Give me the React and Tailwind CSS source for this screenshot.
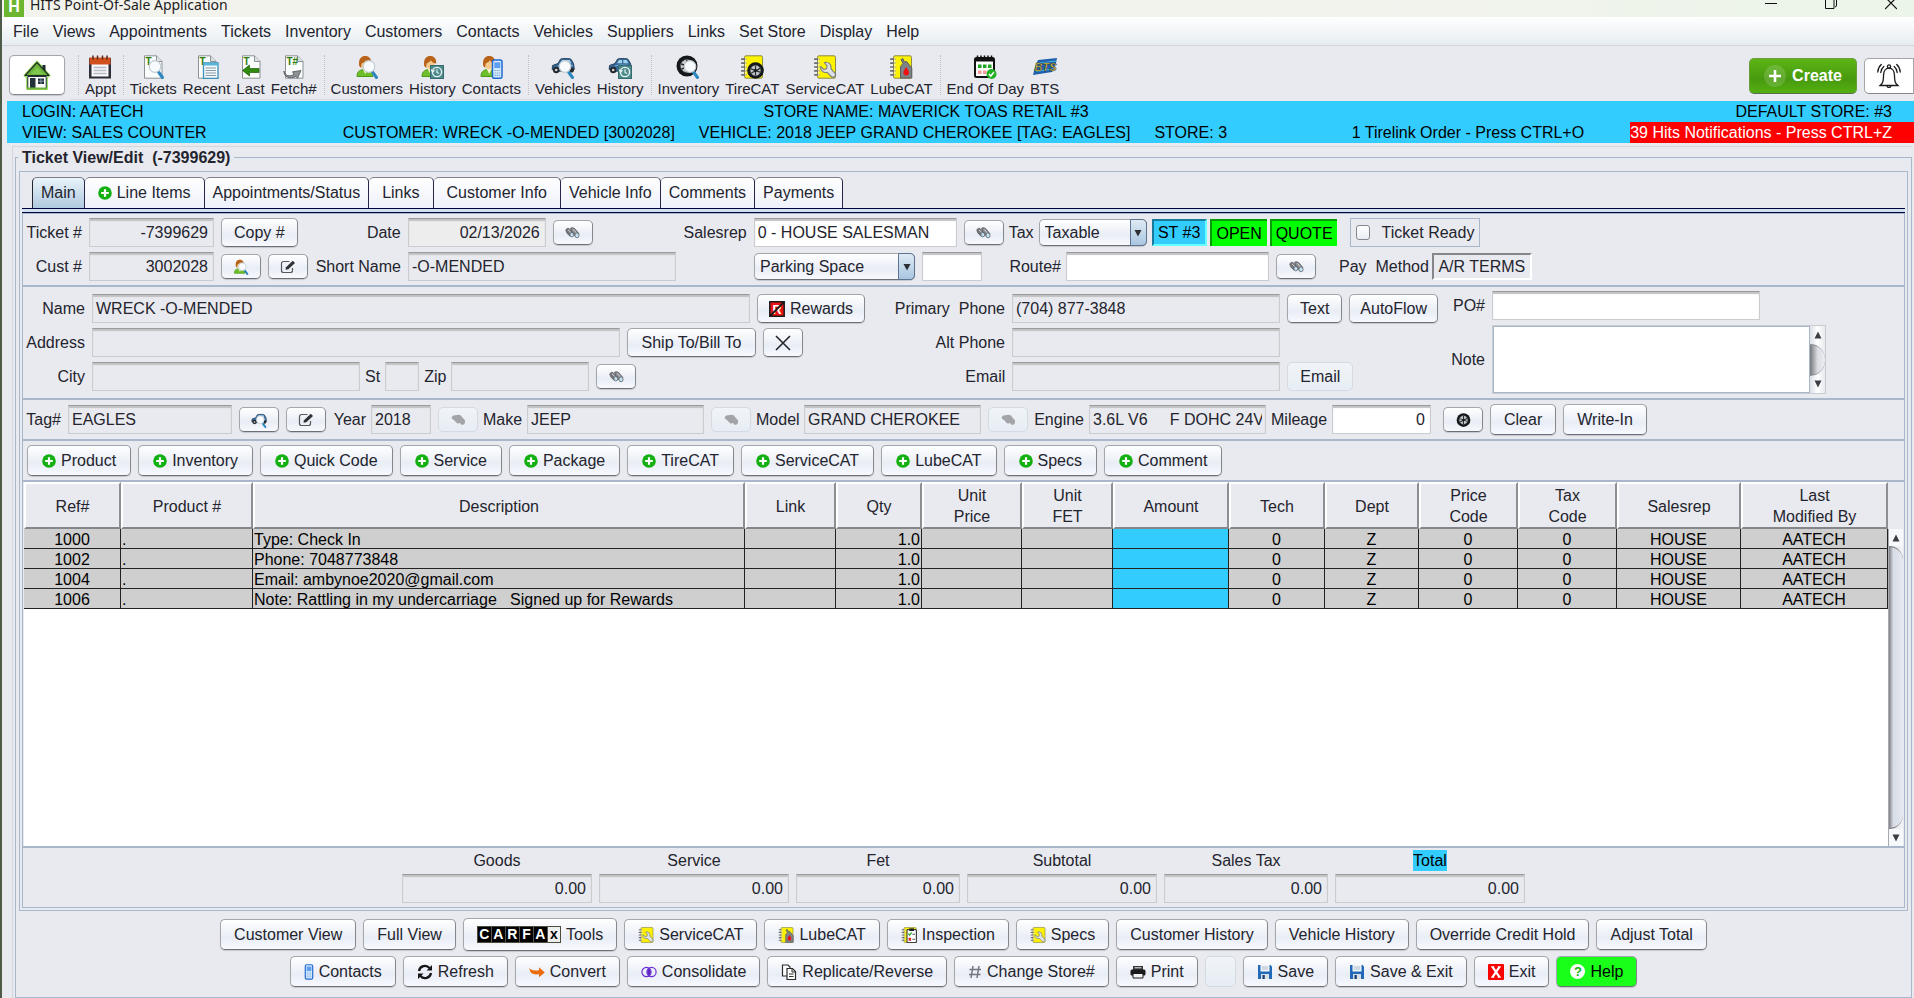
import React, { useState } from "react";
import clsx from "clsx";

/* ------------------ Data ------------------ */
const menus = [
  "File", "Views", "Appointments", "Tickets", "Inventory", "Customers", "Contacts",
  "Vehicles", "Suppliers", "Links", "Set Store", "Display", "Help",
];

const columns = [
  { label: "Ref#", width: "w-[97px]" },
  { label: "Product #", width: "w-[132px]" },
  { label: "Description", width: "" },
  { label: "Link", width: "w-[91px]" },
  { label: "Qty", width: "w-[86px]" },
  { label: "Unit\nPrice", width: "w-[100px]" },
  { label: "Unit\nFET", width: "w-[91px]" },
  { label: "Amount", width: "w-[116px]" },
  { label: "Tech", width: "w-[96px]" },
  { label: "Dept", width: "w-[94px]" },
  { label: "Price\nCode", width: "w-[99px]" },
  { label: "Tax\nCode", width: "w-[99px]" },
  { label: "Salesrep", width: "w-[124px]" },
  { label: "Last\nModified By", width: "w-[147px]" },
];

const lines = [
  { ref: "1000", text: "Type: Check In" },
  { ref: "1002", text: "Phone: 7048773848" },
  { ref: "1004", text: "Email: ambynoe2020@gmail.com" },
  { ref: "1006", text: "Note: Rattling in my undercarriage   Signed up for Rewards" },
];

const addButtons = [
  "Product", "Inventory", "Quick Code", "Service", "Package",
  "TireCAT", "ServiceCAT", "LubeCAT", "Specs", "Comment",
];

const totals = [
  { label: "Goods", width: "w-[190px]" },
  { label: "Service", width: "w-[190px]" },
  { label: "Fet", width: "w-[164px]" },
  { label: "Subtotal", width: "w-[190px]" },
  { label: "Sales Tax", width: "w-[164px]" },
  { label: "Total", width: "w-[190px]", highlight: true },
];

/* ------------------ Icon parts (24x24) ------------------ */
const Svg = ({ size = "w-6 h-6", box = "0 0 24 24", children }) => (
  <svg className={clsx(size, "shrink-0")} viewBox={box} fill="none" aria-hidden="true">
    {children}
  </svg>
);

const Magnifier = () => (
  <g>
    <path d="M17.5 17 L21.5 22.5" stroke="#2b87bd" strokeWidth="3" strokeLinecap="round" />
    <circle cx="14" cy="11.5" r="5.8" fill="#f7fbfd" stroke="#c3cdd3" strokeWidth="1.2" />
  </g>
);

const Clock = () => (
  <g>
    <rect x="10" y="10" width="14" height="14" fill="#4f8a8b" />
    <rect x="10.5" y="10.5" width="13" height="13" stroke="#356b70" />
    <circle cx="17" cy="17" r="4.6" stroke="#e6f3f3" strokeWidth="1.4" />
    <path d="M17 14.3V17.4L19 18.6M11.2 14.5L12.6 17L14.6 15.2" stroke="#e6f3f3" strokeWidth="1.2" />
  </g>
);

const Phone = () => (
  <g>
    <rect x="13.5" y="5" width="9.5" height="18.3" rx="1.8" fill="#d7ebff" stroke="#1f69cf" strokeWidth="1.5" />
    <rect x="15.3" y="7.3" width="6" height="5.8" fill="#5e9ef0" />
    <path d="M15.5 15.5h5.6M15.5 18h5.6M15.5 20.4h5.6" stroke="#7ea9d8" strokeWidth="1.2" strokeDasharray="1.4 .7" />
  </g>
);

const Person = () => (
  <g>
    <path d="M2 21.5C2 16 5.5 14.5 10 14.5S17.5 16 18 21.5Z" fill="#6fbf2a" stroke="#4c9a17" />
    <path d="M7.5 13.5L10.3 19L13 13.5Z" fill="#fff1d2" />
    <ellipse cx="10" cy="8.5" rx="4.3" ry="5.8" fill="#f5c98a" />
    <path d="M4.2 11C3.2 3.5 6.5 1 10.2 1s6.5 2.5 6 7.5C13.5 8.5 12 7 11 5.2 9.5 7.5 7 8 6.5 8.8L6.2 13Z" fill="#b9621a" />
  </g>
);

const Car = () => (
  <g>
    <path d="M1.5 10.5L7 8.5L9.5 4.2C10 3.3 19 3.3 20 4.3L22.5 8.5L23.3 14.5L6 16.5L1.2 14.5Z" fill="#35699b" stroke="#233e5a" />
    <path d="M9 8.2L11 5H14V8.2ZM15.3 8.2V5H18.8L20.3 8.2Z" fill="#9fd0ea" />
    <path d="M7 11C11 9.6 17 10 22 10.5" stroke="#74b3dd" />
    <circle cx="5.2" cy="15" r="3.2" fill="#24282c" />
    <circle cx="5.2" cy="15" r="1.3" fill="#cfd5da" />
    <circle cx="20.3" cy="15" r="2.6" fill="#24282c" />
  </g>
);

const Doc = ({ letter = "T" }) => (
  <g>
    <path d="M3.5 .8H15.5L21 6.5V23.2H3.5Z" fill="#fbfcfc" stroke="#8a9296" />
    <path d="M15.5 .8V6.5H21" fill="#dde3e5" stroke="#8a9296" />
    <text x="4.5" y="10" fontSize="10" fontWeight="700" fontFamily="Liberation Sans" fill="#2f7d0a">
      {letter}
    </text>
  </g>
);

const Notebook = () => (
  <g>
    <rect x="4.5" y=".8" width="18" height="22.4" rx="1.5" fill="#fdf200" stroke="#8c8a4a" />
    <path
      d="M1.8 4.2h4M1.8 8.1h4M1.8 12h4M1.8 15.9h4M1.8 19.8h4"
      stroke="#6d6d6d"
      strokeWidth="1.7"
      strokeLinecap="round"
    />
    <path d="M5.8 3v18" stroke="#fffbb0" strokeWidth="1" />
  </g>
);

const Tire = ({ cx = 12, cy = 12, r = 9 }) => (
  <g>
    <circle cx={cx} cy={cy} r={r} fill="#15181a" />
    <circle cx={cx} cy={cy} r={r * 0.62} fill="#c8ccd0" stroke="#5c6064" strokeWidth=".6" />
    <path
      d={`M${cx} ${cy - r * 0.58}V${cy + r * 0.58}M${cx - r * 0.55} ${cy - r * 0.2}L${cx + r * 0.55} ${cy + r * 0.2}M${cx + r * 0.55} ${cy - r * 0.25}L${cx - r * 0.5} ${cy + r * 0.3}`}
      stroke="#2a2d30"
      strokeWidth={r * 0.15}
    />
    <circle cx={cx} cy={cy} r={r * 0.18} fill="#15181a" />
  </g>
);

const Wrench = () => (
  <path
    d="M12.5 6.5a5 5 0 0 1 6.3 6.2l4 4.3a2.4 2.4 0 0 1-3.5 3.5l-4.2-4.2a5 5 0 0 1-6.3-5.8l3 3 2.7-.7.7-2.7Z"
    fill="#dfe2e4"
    stroke="#7b7e80"
    strokeWidth="1.1"
    transform="translate(-1 1)"
  />
);

const OilCan = () => (
  <g>
    <path d="M12 4.5l2-.8 1.2 3h2.6L22.8 13V23H11.5V11.5L14 8.5Z" fill="#7f8386" stroke="#5b5e60" />
    <path d="M17.2 12c1.7 2.6 2.8 4 2.8 5.6a2.8 2.8 0 0 1-5.6 0c0-1.6 1.1-3 2.8-5.6Z" fill="#ee1111" />
  </g>
);

/* ------------------ Icons ------------------ */
const HouseIcon = () => (
  <Svg size="w-7 h-[30px]" box="0 0 28 30">
    <path
      d="M1.5 15.5L14 1.5L26.5 15.5L24 17.5V29H4V17.5Z"
      fill="#ffffff"
      stroke="#9fdc6b"
      strokeWidth="2"
      strokeLinejoin="round"
    />
    <path d="M19.5 5h3v6h-3z" fill="#1d2b33" />
    <path d="M14 2.5L26 15.5H2Z" fill="#6cb33a" stroke="#1f2f24" strokeWidth="1.2" strokeLinejoin="round" />
    <path d="M14 7L20.5 14H7.5Z" fill="#7fc94a" />
    <path d="M4.8 16.5H23.2V28.5H4.8Z" fill="#fff" stroke="#22303a" strokeWidth="1" />
    <path d="M7 18h5.5v10H7z" fill="#22303a" />
    <path d="M15 18.5h6V24h-6z" fill="#22303a" />
    <path d="M18 18.5V24M15 21.2h6" stroke="#9db4c0" strokeWidth=".8" />
    <path d="M4 28.5h20" stroke="#6cb33a" strokeWidth="2" />
  </Svg>
);

const ApptIcon = () => (
  <Svg>
    <path d="M1 3h22v20.5H1z" fill="#2f2c3a" />
    <path d="M3.5 7h17v14.5h-17z" fill="#f7f9fb" />
    <path d="M1.5 2.5h21v7h-21z" fill="#d2501c" />
    <path d="M5 .5v4M9.5 .5v4M14.5 .5v4M19 .5v4" stroke="#5a2817" strokeWidth="1.5" />
    <path d="M5.5 12.5h13M5.5 15.5h13M5.5 18.5h13" stroke="#b7bcc4" strokeWidth="1.3" />
  </Svg>
);

const EndOfDayIcon = () => (
  <Svg>
    <rect x="2" y="3" width="19" height="19" rx="1.5" fill="#fff" stroke="#111" strokeWidth="2" />
    <path d="M2 3.5h19v3H2z" fill="#111" />
    <path d="M4.5 .5v5M8 .5v5M11.5 .5v5M15 .5v5M18.5 .5v5" stroke="#111" strokeWidth="1.5" />
    <path d="M5 9.5h3.5v3.5H5zM10 9.5h3.5v3.5H10zM15 9.5h3.5v3.5H15z" fill="#1fa51f" />
    <path d="M5 15.5h3.5V19H5zM10 15.5h3.5V19H10z" fill="#f59a9a" />
    <circle cx="18.5" cy="19" r="5" fill="#22b122" />
    <path d="M16 19l1.8 2 3.2-4" stroke="#fff" strokeWidth="1.5" />
  </Svg>
);

const BtsIcon = () => (
  <Svg size="w-[26px] h-6" box="0 0 26 24">
    <path d="M6 5L25 3L24 8L20 17L1 20L3 12Z" fill="#1e5fae" />
    <path d="M4 16.5L21 14M5 8.5L24 6" stroke="#4ac0d8" strokeWidth="1" />
    <text
      x="2.5"
      y="16"
      fontSize="11"
      fontWeight="700"
      fontStyle="italic"
      fontFamily="Liberation Sans"
      fill="#e6c230"
      stroke="#16314f"
      strokeWidth=".5"
    >
      BTS
    </text>
  </Svg>
);

const RecentIcon = () => (
  <Svg>
    <Doc />
    <path d="M8.5 8h14.5v15.3H8.5z" fill="#f3fafd" stroke="#3c8fb5" strokeWidth="1.3" />
    <path d="M8.5 8h14.5v2.5H8.5z" fill="#58b4d8" />
    <path d="M10.5 13h10.5M10.5 15.5h10.5M10.5 18h10.5M10.5 20.5h10.5" stroke="#8799a3" />
  </Svg>
);

const LastIcon = () => (
  <Svg>
    <Doc />
    <path d="M3.5 15.5L10.5 10V13.5H20V17.5H10.5V21Z" fill="#2f8a10" stroke="#1c5c06" strokeWidth=".7" />
  </Svg>
);

const FetchIcon = () => (
  <Svg>
    <Doc letter="T#" />
    <path d="M2 16C3 20.5 7 22 12 19.5L10.5 16.8L19 15.5L15.5 23.3L14 21.5C8 24.5 1.5 22 2 16Z" fill="#8c9194" stroke="#54585b" strokeWidth=".8" />
  </Svg>
);

const Bino = ({ disabled }) => (
  <Svg size="w-[15px] h-3" box="0 0 15 12">
    {disabled ? (
      <path
        d="M.8 4.5C.5 2.5 2 1 4 1.2L6.5 1C8.5 .5 10 1.5 11 3L13.8 6C14.6 8.5 13.6 10.5 12 10.8S9.5 10 9 8.8C8 9.8 6.2 9.8 5 8.2L3.5 6.5Z"
        fill="#a3a4a8"
      />
    ) : (
      <g strokeWidth=".7" stroke="#4d5054">
        <path d="M5.5 1.2C7 .5 9 .7 10.3 2.2L13.8 6.5L10.3 9.3L6.5 4.5Z" fill="#85888c" />
        <path d="M.9 3.8C.7 2 2.2 1 3.8 1.4L8 5.8L5.2 9.2L2.2 6.5Z" fill="#75787c" />
        <path d="M3 2.8L6.3 6M8 2.2L11.5 6" stroke="#d5d8db" strokeWidth="1" />
        <ellipse cx="6.8" cy="7.7" rx="1.9" ry="2.2" fill="#c4e0f3" />
        <ellipse cx="12" cy="8.3" rx="2.1" ry="2.5" fill="#c4e0f3" />
      </g>
    )}
  </Svg>
);

const EditIcon = () => (
  <Svg size="w-4 h-[14px]" box="0 0 16 14">
    <path d="M9.5 1.5H3.5a2 2 0 0 0-2 2v7a2 2 0 0 0 2 2h7a2 2 0 0 0 2-2V8" stroke="#55585c" strokeWidth="1.2" />
    <path d="M5.5 9.8L6 7.2L12.7 .8L15 3L8.3 9.3Z" fill="#2e3135" />
  </Svg>
);

const PlusIcon = () => (
  <Svg size="w-[14px] h-[14px]" box="0 0 14 14">
    <circle cx="7" cy="7" r="6.8" fill="#14b012" />
    <path d="M7 3.2v7.6M3.2 7h7.6" stroke="#fff" strokeWidth="2.2" />
  </Svg>
);

const BellIcon = () => (
  <Svg size="w-6 h-[26px]" box="0 0 24 26">
    <g stroke="#1c1c1c" strokeWidth="1.3" strokeLinecap="round">
      <path d="M5 20.5C6.5 18.5 6.5 17 6.5 12.5C6.5 8 8.8 5.2 12 5.2S17.5 8 17.5 12.5C17.5 17 17.5 18.5 19 20.5L21 22.5H3Z" />
      <path d="M10 23a2.1 2.1 0 0 0 4 0" />
      <circle cx="12" cy="3.5" r="1.6" />
      <path d="M6.8 3.5C5 5 4 7 3.8 9.5M4.3 1.5C2 3.5 1 6 .8 9M17.2 3.5C19 5 20 7 20.2 9.5M19.7 1.5C22 3.5 23 6 23.2 9" />
    </g>
  </Svg>
);

const SmallServiceCat = () => (
  <Svg size="w-4 h-4">
    <Notebook />
    <Wrench />
  </Svg>
);

const SmallLubeCat = () => (
  <Svg size="w-4 h-4">
    <Notebook />
    <OilCan />
  </Svg>
);

const InspectionIcon = () => (
  <Svg size="w-4 h-4">
    <Notebook />
    <path d="M9 4h14v19.5H9z" fill="#fff" stroke="#222" strokeWidth="1.5" />
    <path d="M12.5 2h7v4h-7z" fill="#222" />
    <path d="M11 10l2 2 3-4" stroke="#1fa51f" strokeWidth="1.8" />
    <path d="M11.5 16.5l3.5 4M15 16.5l-3.5 4" stroke="#e02020" strokeWidth="1.8" />
    <path d="M17 11h4M17 18.5h4" stroke="#555" strokeWidth="1.6" />
  </Svg>
);

const RewardsIcon = () => (
  <Svg size="w-4 h-4" box="0 0 16 16">
    <path d="M.8 .8h14.4v14.4H.8z" fill="#e81414" stroke="#1a1a1a" strokeWidth="1.5" />
    <text x="3.5" y="12.8" fontSize="12.5" fontWeight="700" fontFamily="Liberation Sans" fill="#fff">
      R
    </text>
    <path d="M1 15L15 1" stroke="#1a1a1a" strokeWidth="1.8" />
  </Svg>
);

const PhoneIcon = () => (
  <Svg size="w-[10px] h-4" box="12.5 4 11.5 20.5">
    <Phone />
  </Svg>
);

const RefreshIcon = () => (
  <Svg size="w-4 h-4" box="0 0 16 16">
    <path d="M2 7A6 6 0 0 1 12.5 4M14 9A6 6 0 0 1 3.5 12" stroke="#161616" strokeWidth="2.3" />
    <path d="M15 1v5.5H9.5ZM1 15V9.5h5.5Z" fill="#161616" />
  </Svg>
);

const ConvertIcon = () => (
  <Svg size="w-4 h-4" box="0 0 16 16">
    <path d="M.5 3.5C1.5 6.300 4 6.800 10 6.300V3.300L15.8 8.500L10 13.300V10.300C4 11 .5 9.500 .5 3.500Z" fill="#ec6c0c" />
  </Svg>
);

const ConsolidateIcon = () => (
  <Svg size="w-4 h-4" box="0 0 16 16">
    <path d="M8 4.2a4.9 4.9 0 0 1 0 7.6a4.9 4.9 0 0 1 0-7.6Z" fill="#5b22c4" />
    <circle cx="5.5" cy="8" r="4.6" stroke="#6a2fd0" strokeWidth="1.2" />
    <circle cx="10.5" cy="8" r="4.6" stroke="#6a2fd0" strokeWidth="1.2" />
  </Svg>
);

const CopyIcon = () => (
  <Svg size="w-4 h-4" box="0 0 16 16">
    <path d="M1.5 1h5.5l2 2v9H1.5z" fill="#fff" stroke="#2b2b2b" strokeWidth="1.2" />
    <path d="M6 4.5h5.5L14.5 7.5v8H6z" fill="#fff" stroke="#2b2b2b" strokeWidth="1.2" />
    <path d="M11 4.5v3.5h3.5M8 10h4.5M8 12.5h4.5" stroke="#2b2b2b" />
  </Svg>
);

const HashIcon = () => (
  <Svg size="w-[14px] h-4" box="0 0 14 16">
    <path d="M5 2L3 14M11 2L9 14M1.5 5.5H13M1 10.5H12.5" stroke="#75767f" strokeWidth="1.5" />
  </Svg>
);

const PrintIcon = () => (
  <Svg size="w-4 h-4" box="0 0 16 16">
    <path d="M3 2h10v4H3z" fill="#35383b" />
    <path d="M4.5 3.8h7" stroke="#e8e8e8" />
    <rect x=".5" y="5.5" width="15" height="6" rx="1.5" fill="#191b1d" />
    <path d="M3 9.5h10v4.5H3z" fill="#f2f2f2" stroke="#191b1d" />
  </Svg>
);

const SaveIcon = () => (
  <Svg size="w-4 h-4" box="0 0 16 16">
    <path d="M1 1h12.5L15 2.5V15H1z" fill="#2269b8" />
    <path d="M3.5 1h9v6.5h-9z" fill="#f2f6fa" />
    <path d="M4.8 3h6.4M4.8 5h6.4" stroke="#a7b6c6" strokeWidth=".9" />
    <path d="M4 10h8v5H4z" fill="#d8dfe6" />
    <path d="M5.5 11h2.3v4H5.5z" fill="#173f73" />
  </Svg>
);

const ExitIcon = () => (
  <Svg size="w-4 h-4" box="0 0 16 16">
    <rect width="16" height="16" rx="1" fill="#fb0000" />
    <path d="M4.5 2.8L11.5 13.2M11.5 2.8L4.5 13.2" stroke="#fff" strokeWidth="2.2" />
    <path d="M3 2.8h3.2M9.8 2.8H13M3 13.2h3.2M9.8 13.2H13" stroke="#fff" strokeWidth="1" />
  </Svg>
);

const HelpIcon = () => (
  <span className="flex h-[15px] w-[15px] items-center justify-center rounded-full bg-white text-[13px] leading-none font-bold text-[#12b312]">
    ?
  </span>
);

const Carfax = () => (
  <span className="flex h-[17px] border border-[#4c4c38] bg-black text-sm leading-[15px] font-bold text-white">
    {["C", "A", "R", "F", "A"].map((c, i) => (
      <span key={i} className="w-[14px] border-r border-[#555] text-center">
        {c}
      </span>
    ))}
    <span className="w-[12px] bg-[#eee] text-center text-black">x</span>
  </span>
);

/* ------------------ Controls ------------------ */
const btnFace =
  "border border-[#a3a6ab] border-b-[#6d6f76] border-r-[#85878e] bg-linear-to-b from-white via-[#e9edf5] via-60% to-[#f8f9ff] rounded-[5px] shadow-[0_1px_1px_#c4c6cc]";

const Button = ({ children, className, disabled, pad = "px-3", ...rest }) => (
  <button
    type="button"
    disabled={disabled}
    className={clsx(
      "flex shrink-0 items-center justify-center gap-[5px] whitespace-nowrap",
      pad,
      disabled
        ? "rounded-[5px] border border-[#d3dae4] bg-linear-to-b from-[#f1f4f8] to-[#e6edf4]"
        : btnFace,
      className
    )}
    {...rest}
  >
    {children}
  </button>
);

const ActionButton = (props) => <Button pad="px-[13px]" {...props} />;

const IconButton = ({ label, disabled, children }) => (
  <Button aria-label={label} disabled={disabled} pad="px-0" className="h-[25px] w-10">
    {children}
  </Button>
);

const Field = ({ id, className, editable, right, ...rest }) => (
  <input
    id={id}
    readOnly={!editable}
    className={clsx(
      "h-[29px] shrink-0 border border-[#cbccd0] border-t-[#9b9b9d] px-[3px] shadow-[inset_0_2px_1px_#c2c2c4] outline-none",
      editable ? "bg-white" : "bg-[#e9eaef]",
      right && "pr-[5px] text-right",
      className
    )}
    {...rest}
  />
);

const Label = ({ htmlFor, className, children }) => (
  <label htmlFor={htmlFor} className={clsx("shrink-0 text-right whitespace-nowrap", className)}>
    {children}
  </label>
);

const Select = ({ label, option, className }) => (
  <div className={clsx("relative h-[27px] shrink-0", className)}>
    <select aria-label={label} className={clsx(btnFace, "h-full w-full appearance-none pl-[5px] outline-none")}>
      <option>{option}</option>
    </select>
    <span className="pointer-events-none absolute inset-y-0 right-0 flex w-[17px] items-center justify-center rounded-r-[5px] border border-[#5d7590] bg-linear-to-b from-[#dfeaf4] to-[#a9c6e0]">
      <Svg size="w-2 h-2" box="0 0 8 8">
        <path d="M.5 1h7L4 7.5Z" fill="#2d2f33" />
      </Svg>
    </span>
  </div>
);

const Panel = ({ className, children }) => (
  <section className={clsx("border border-[#a9b7ca] px-px", className)}>{children}</section>
);

const ToolItem = ({ label, children }) => (
  <button type="button" className="flex flex-col items-center px-[3px] text-[15px] leading-5 whitespace-nowrap">
    {children}
    {label}
  </button>
);

const Sep = () => <span className="mr-[3px] ml-1 h-10 border-l border-dotted border-[#bfc1c6]" />;

const Arrow = ({ up }) => (
  <Svg size="w-2 h-2" box="0 0 8 8">
    <path d={up ? "M4 .5L7.5 7.5H.5Z" : "M4 7.5L7.5 .5H.5Z"} fill="#3c3d42" />
  </Svg>
);

/* ------------------ Page header ------------------ */
const Header = () => (
  <header>
    <div className="flex h-[17px] items-center justify-between overflow-hidden bg-linear-to-r from-[#f3f3ee] from-70% to-[#ebf5e8] pl-[2px]">
      <div className="flex items-end gap-[6px] pb-2">
        <span className="flex h-5 w-5 items-center justify-center bg-[#6cb52f] font-bold text-white">H</span>
        <span className="font-['Noto_Sans'] text-sm leading-6 text-[#1b1b1b]">HITS Point-Of-Sale Application</span>
      </div>
      <div className="flex items-center gap-12 pr-[17px] pb-2">
        <button type="button" aria-label="Minimize">
          <Svg size="w-3 h-3" box="0 0 12 12">
            <path d="M0 4.5h12" stroke="#111" />
          </Svg>
        </button>
        <button type="button" aria-label="Restore">
          <Svg size="w-3 h-4" box="0 0 12 16">
            <path d="M.5 0V11.5H9V0M11.5 0V8Q11.5 10 10 10" stroke="#111" />
          </Svg>
        </button>
        <button type="button" aria-label="Close">
          <Svg size="w-3 h-4" box="0 0 12 16">
            <path d="M0 12L12 0M12 12L0 0" stroke="#111" strokeWidth="1.2" />
          </Svg>
        </button>
      </div>
    </div>

    <nav className="flex h-[29px] items-center gap-[14px] border-b border-[#d3d6dc] bg-linear-to-b from-white to-[#e6edf1] pt-[2px] pl-[11px]">
      {menus.map((m) => (
        <button key={m} type="button">
          {m}
        </button>
      ))}
    </nav>

    <div className="flex h-[55px] items-start">
      <button type="button" aria-label="Home" className="mt-[9px] ml-[7px] flex h-10 w-14 items-center justify-center rounded-[5px] border border-[#a3a6ab] border-b-[#85878e] bg-white shadow-[0_1px_1px_#c4c6cc]">
        <HouseIcon />
      </button>
      <div className="ml-[5px] flex h-[54px] border-b border-[#d8dade] pt-[9px] pl-1">
        <Sep />
        <ToolItem label="Appt"><ApptIcon /></ToolItem>
        <Sep />
        <ToolItem label="Tickets"><Svg><Doc /><Magnifier /></Svg></ToolItem>
        <ToolItem label="Recent"><RecentIcon /></ToolItem>
        <ToolItem label="Last"><LastIcon /></ToolItem>
        <ToolItem label="Fetch#"><FetchIcon /></ToolItem>
        <Sep />
        <ToolItem label="Customers"><Svg><Person /><Magnifier /></Svg></ToolItem>
        <ToolItem label="History"><Svg><Person /><Clock /></Svg></ToolItem>
        <ToolItem label="Contacts"><Svg><Person /><Phone /></Svg></ToolItem>
        <Sep />
        <ToolItem label="Vehicles"><Svg><Car /><Magnifier /></Svg></ToolItem>
        <ToolItem label="History"><Svg><Car /><Clock /></Svg></ToolItem>
        <Sep />
        <ToolItem label="Inventory"><Svg><Tire cx={11} cy={11} r={10.5} /><Magnifier /></Svg></ToolItem>
        <ToolItem label="TireCAT"><Svg><Notebook /><Tire cx={15.5} cy={15.5} r={8.3} /></Svg></ToolItem>
        <ToolItem label="ServiceCAT"><Svg><Notebook /><Wrench /></Svg></ToolItem>
        <ToolItem label="LubeCAT"><Svg><Notebook /><OilCan /></Svg></ToolItem>
        <Sep />
        <ToolItem label="End Of Day"><EndOfDayIcon /></ToolItem>
        <ToolItem label="BTS"><BtsIcon /></ToolItem>
      </div>
      <button
        type="button"
        className="mt-3 ml-auto flex h-9 w-[108px] items-center justify-center gap-[6px] rounded-[5px] border border-[#6c9f3c] border-b-[#5b6b4c] bg-linear-to-b from-[#5cb416] via-[#479a0e] via-60% to-[#55b011] font-bold text-white"
      >
        <span className="flex h-[22px] w-[22px] items-center justify-center rounded-full bg-white/15">
          <Svg size="w-3 h-3" box="0 0 12 12">
            <path d="M6 0v12M0 6h12" stroke="#fff" strokeWidth="2.6" />
          </Svg>
        </span>
        Create
      </button>
      <button
        type="button"
        aria-label="Notifications"
        className="mt-3 ml-[7px] flex h-9 w-[50px] items-center justify-center rounded-l-[5px] border border-[#a3a6ab] border-b-[#85878e] bg-white"
      >
        <BellIcon />
      </button>
    </div>

    <div className="ml-[5px] bg-[#33ccff] leading-[21px] whitespace-nowrap text-black">
      <div className="flex pr-[22px] pl-[15px]">
        <span>LOGIN: AATECH</span>
        <span className="ml-[620px]">STORE NAME: MAVERICK TOAS RETAIL #3</span>
        <span className="ml-auto">DEFAULT STORE: #3</span>
      </div>
      <div className="flex pl-[15px]">
        <span>VIEW: SALES COUNTER</span>
        <span className="ml-[136px]">CUSTOMER: WRECK -O-MENDED [3002028]</span>
        <span className="ml-6">VEHICLE: 2018 JEEP GRAND CHEROKEE [TAG: EAGLES]</span>
        <span className="ml-6">STORE: 3</span>
        <span className="ml-auto">1 Tirelink Order - Press CTRL+O</span>
        <span className="ml-[46px] bg-[#ff0000] pr-[22px] text-white">39 Hits Notifications - Press CTRL+Z</span>
      </div>
    </div>
  </header>
);

/* ------------------ Ticket section ------------------ */
const TicketPanel = () => (
  <Panel className="flex flex-col gap-[5px] py-1">
    <div className="flex items-center gap-[7px]">
      <Label htmlFor="ticket" className="w-[58px]">Ticket #</Label>
      <Field id="ticket" className="w-[125px]" right defaultValue="-7399629" />
      <Button className="h-[29px]">Copy #</Button>
      <Label htmlFor="date" className="w-24">Date</Label>
      <Field id="date" className="w-[138px] bg-[#ededed]!" right defaultValue="02/13/2026" />
      <IconButton label="Pick date"><Bino /></IconButton>
      <Label htmlFor="salesrep" className="w-[147px]">Salesrep</Label>
      <Field id="salesrep" className="w-[203px]" editable defaultValue="0 - HOUSE SALESMAN" />
      <div className="flex items-center gap-[5px]">
        <IconButton label="Find salesrep"><Bino /></IconButton>
        <span>Tax</span>
        <Select label="Tax" option="Taxable" className="w-[108px]" />
        <div className="flex gap-[3px] text-center leading-[25px] text-black">
          <span className="w-[55px] border-2 border-[#6ff] border-t-[#1a7a99] border-l-[#1a7a99] bg-[#33ccff] leading-[23px]">ST #3</span>
          <span className="w-[57px] border-t-2 border-l-2 border-[#099a09] bg-[#00ff00]">OPEN</span>
          <span className="w-[67px] border-t-2 border-l-2 border-[#099a09] bg-[#00ff00]">QUOTE</span>
        </div>
      </div>
      <label className="ml-[6px] flex h-[29px] items-center gap-3 border border-[#a9b7ca] px-[5px]">
        <input
          type="checkbox"
          className="h-[15px] w-[14px] appearance-none rounded-[3px] border border-[#85878e] bg-linear-to-b from-white to-[#e9edf5] checked:bg-[#33ccff]"
        />
        Ticket Ready
      </label>
    </div>
    <div className="flex items-center gap-[7px]">
      <Label htmlFor="cust" className="w-[58px]">Cust #</Label>
      <Field id="cust" className="w-[125px]" right defaultValue="3002028" />
      <IconButton label="Find customer"><Svg size="w-4 h-4"><Person /><Magnifier /></Svg></IconButton>
      <IconButton label="Edit customer"><EditIcon /></IconButton>
      <Label htmlFor="short" className="w-[86px]">Short Name</Label>
      <Field id="short" className="w-[268px]" defaultValue="-O-MENDED" />
      <Select label="Parking Space" option="Parking Space" className="ml-[71px] w-[161px]" />
      <Field aria-label="Parking space value" className="w-[60px]" editable />
      <div className="flex w-[280px] items-center justify-end gap-[5px]">
        <Label htmlFor="route">Route#</Label>
        <Field id="route" className="w-[203px]" editable />
      </div>
      <IconButton label="Find route"><Bino /></IconButton>
      <div className="ml-4 flex items-center gap-[3px]">
        <span>Pay&nbsp; Method</span>
        <span className="w-[100px] border-2 border-white border-t-[#85868a] border-l-[#85868a] text-center leading-[23px]">
          A/R TERMS
        </span>
      </div>
    </div>
  </Panel>
);

/* ------------------ Customer section ------------------ */
const CustomerPanel = () => (
  <Panel className="flex py-1">
    <div className="flex w-[1413px] shrink-0 flex-col gap-[5px] pt-[3px]">
      <div className="flex items-center gap-[7px]">
        <Label htmlFor="name" className="w-[61px]">Name</Label>
        <Field id="name" className="w-[658px]" defaultValue="WRECK -O-MENDED" />
        <Button className="h-[29px] w-[108px]"><RewardsIcon />Rewards</Button>
        <Label htmlFor="phone" className="w-[133px]">Primary&nbsp; Phone</Label>
        <Field id="phone" className="w-[268px]" defaultValue="(704) 877-3848" />
        <Button className="h-[29px]">Text</Button>
        <Button pad="px-[10px]" className="h-[29px]">AutoFlow</Button>
      </div>
      <div className="flex items-center gap-[7px]">
        <Label htmlFor="address" className="w-[61px]">Address</Label>
        <Field id="address" className="w-[528px]" />
        <Button className="h-[29px] w-[129px]">Ship To/Bill To</Button>
        <Button aria-label="Clear address" pad="px-0" className="h-[29px] w-10">
          <Svg size="w-4 h-4" box="0 0 16 16">
            <path d="M1 1L15 15M15 1L1 15" stroke="#26262b" strokeWidth="1.6" />
          </Svg>
        </Button>
        <Label htmlFor="alt" className="w-[195px]">Alt Phone</Label>
        <Field id="alt" className="w-[268px]" />
      </div>
      <div className="flex items-center gap-[7px]">
        <Label htmlFor="city" className="w-[61px]">City</Label>
        <div className="flex items-center gap-[5px]">
          <Field id="city" className="w-[268px]" />
          <Label htmlFor="st">St</Label>
          <Field id="st" className="w-[34px]" />
          <Label htmlFor="zip">Zip</Label>
          <Field id="zip" className="w-[138px]" />
        </div>
        <IconButton label="Find zip"><Bino /></IconButton>
        <Label htmlFor="email" className="w-[362px]">Email</Label>
        <Field id="email" className="w-[268px]" />
        <Button className="h-[29px]" disabled>Email</Button>
      </div>
    </div>

    <div className="flex flex-col gap-[5px]">
      <div className="flex items-center gap-[7px]">
        <Label htmlFor="po" className="w-12">PO#</Label>
        <Field id="po" className="w-[268px]" editable />
      </div>
      <div className="flex items-center gap-[7px]">
        <Label htmlFor="note" className="w-12">Note</Label>
        <div className="flex h-[69px] border border-[#cbccd0]">
          <textarea id="note" className="w-[317px] resize-none border border-[#a9b7ca] bg-white outline-none" />
          <div className="flex w-[15px] flex-col items-center justify-between bg-linear-to-r from-[#dcdfe4] via-white to-[#e6e9ee] py-[5px]">
            <Arrow up />
            <span className="h-8 w-full rounded-r-full border-y border-[#8b8d92] bg-linear-to-r from-[#77797e] via-[#d9dce2] to-[#eceef2]" />
            <Arrow />
          </div>
        </div>
      </div>
    </div>
  </Panel>
);

/* ------------------ Vehicle section ------------------ */
const VehiclePanel = () => (
  <Panel className="flex h-[41px] items-center gap-[7px]">
    <Label htmlFor="tag" className="w-[37px]">Tag#</Label>
    <Field id="tag" className="w-[164px]" defaultValue="EAGLES" />
    <IconButton label="Find vehicle"><Svg size="w-[18px] h-4"><Car /><Magnifier /></Svg></IconButton>
    <div className="flex items-center gap-[5px]">
      <IconButton label="Edit vehicle"><EditIcon /></IconButton>
      <Label htmlFor="year" className="w-[35px]">Year</Label>
      <Field id="year" className="w-[60px]" defaultValue="2018" />
    </div>
    <div className="flex items-center gap-[5px]">
      <IconButton label="Find year" disabled><Bino disabled /></IconButton>
      <Label htmlFor="make" className="w-[39px]">Make</Label>
      <Field id="make" className="w-[177px]" defaultValue="JEEP" />
    </div>
    <div className="flex items-center gap-[5px]">
      <IconButton label="Find make" disabled><Bino disabled /></IconButton>
      <Label htmlFor="model" className="w-[43px]">Model</Label>
      <Field id="model" className="w-[177px]" defaultValue="GRAND CHEROKEE" />
    </div>
    <div className="flex items-center gap-[5px]">
      <IconButton label="Find model" disabled><Bino disabled /></IconButton>
      <Label htmlFor="engine" className="w-[51px]">Engine</Label>
      <Field id="engine" className="w-[177px]" defaultValue="3.6L V6     F DOHC 24V" />
      <Label htmlFor="mileage" className="w-[56px]">Mileage</Label>
      <Field id="mileage" className="w-[99px]" editable right defaultValue="0" />
    </div>
    <div className="ml-[5px] flex items-center gap-[7px]">
      <IconButton label="Tires"><Svg size="w-[15px] h-4"><Tire r={11} /></Svg></IconButton>
      <ActionButton className="h-[31px]">Clear</ActionButton>
      <ActionButton className="h-[31px]">Write-In</ActionButton>
    </div>
  </Panel>
);

/* ------------------ Line item table ------------------ */
const LineTable = () => (
  <Panel className="flex min-h-48 flex-1">
    <div className="min-w-0 flex-1 bg-white">
      <table className="w-full table-fixed border-separate border-spacing-0">
        <thead>
          <tr>
            {columns.map((c) => (
              <th
                key={c.label}
                className={clsx(
                  "h-[47px] border-2 border-t-white border-r-[#8d8e92] border-b-[#85868a] border-l-white bg-[#e9eaef] p-0 pt-px leading-[21px] font-normal whitespace-pre-line",
                  c.width
                )}
              >
                {c.label}
              </th>
            ))}
          </tr>
        </thead>
        <tbody className="text-center leading-[17px] whitespace-pre text-black [&_td]:h-5 [&_td]:border-r [&_td]:border-b [&_td]:border-[#222] [&_td]:px-px [&_td]:pt-[2px] [&_td]:pb-0">
          {lines.map((l) => (
            <tr key={l.ref} className="bg-[#cfcfcf]">
              <td>{l.ref}</td>
              <td className="text-left">.</td>
              <td className="text-left">{l.text}</td>
              <td></td>
              <td className="text-right">1.0</td>
              <td></td>
              <td></td>
              <td className="bg-[#33ccff]"></td>
              <td>0</td>
              <td>Z</td>
              <td>0</td>
              <td>0</td>
              <td>HOUSE</td>
              <td>AATECH</td>
            </tr>
          ))}
        </tbody>
      </table>
    </div>
    <div className="flex w-[15px] flex-col pt-[47px]">
      <div className="flex flex-1 flex-col items-center border-l border-[#a9abb0] bg-linear-to-r from-[#dde0e6] to-[#f2f4f8]">
        <span className="flex h-[17px] w-full items-center justify-center bg-[#f7f8fb]"><Arrow up /></span>
        <span className="w-full flex-1 rounded-r-full border-y border-[#77797e] bg-linear-to-r from-[#7d7f85] via-[#d8dce5] via-30% to-[#e6e9f1]" />
        <span className="flex h-[17px] w-full items-center justify-center bg-[#f7f8fb]"><Arrow /></span>
      </div>
    </div>
  </Panel>
);

export default function App() {
  const [tab, setTab] = useState("Main");

  const tabs = [
    { name: "Main" },
    { name: "Line Items", wide: true, icon: <PlusIcon /> },
    { name: "Appointments/Status" },
    { name: "Links", wide: true },
    { name: "Customer Info", wide: true },
    { name: "Vehicle Info" },
    { name: "Comments" },
    { name: "Payments" },
  ];

  return (
    <div className="flex min-h-screen flex-col overflow-x-hidden border-l-2 border-[#4d5b48] bg-[#e9eaef] font-['Liberation_Sans',Arial,sans-serif] text-base leading-5 text-[#23242e]">
      <Header />

      <main className="mt-[3px] mr-[2px] ml-[10px] flex flex-1 flex-col border-t border-l border-[#d3d6dc] pt-[10px] pl-[2px]">
        <section className="flex flex-1 flex-col border border-[#a9b7ca] px-[3px]">
          {/* Title sits on the frame line */}
          <h1 className="-mt-[11px] -ml-px self-start bg-[#e9eaef] px-1 leading-[21px] font-bold whitespace-pre">
            {"Ticket View/Edit  (-7399629)"}
          </h1>

          <div className="mt-[3px] flex flex-1 flex-col border border-[#a9b7ca] px-[2px] pt-[5px] pb-[2px]">
            {/* Tabs */}
            <div role="tablist" className="flex pl-[10px]">
              {tabs.map((t) => (
                <button
                  key={t.name}
                  type="button"
                  role="tab"
                  aria-selected={tab === t.name}
                  onClick={() => setTab(t.name)}
                  className={clsx(
                    "flex h-[31px] items-center gap-[5px] rounded-t-[5px] border-t border-r border-t-[#7d808c] border-r-[#26264a] bg-linear-to-b first:border-l",
                    t.wide ? "px-[13px]" : "px-2",
                    tab === t.name ? "from-[#e9f3fa] to-[#b0cae0]" : "from-white to-[#eef1fb]"
                  )}
                >
                  {t.icon}
                  {t.name}
                </button>
              ))}
            </div>
            <div className="h-[5px] border-y border-[#04043a] bg-[#cfe3f5]" />

            <TicketPanel />
            <CustomerPanel />
            <VehiclePanel />

            <Panel className="flex h-[41px] items-center gap-[7px] pl-1">
              {addButtons.map((b) => (
                <Button key={b} pad="px-[14px]" className="h-[31px]">
                  <PlusIcon />
                  {b}
                </Button>
              ))}
            </Panel>

            <LineTable />

            {/* Totals */}
            <Panel className="flex justify-center gap-[7px] pt-[2px] pb-1">
              {totals.map((t) => (
                <div key={t.label} className="flex flex-col items-center gap-[3px]">
                  <label htmlFor={t.label} className={clsx("leading-[21px]", t.highlight && "bg-[#33ccff] text-black")}>
                    {t.label}
                  </label>
                  <Field id={t.label} className={t.width} right defaultValue="0.00" />
                </div>
              ))}
            </Panel>
          </div>

          {/* Actions */}
          <div className="flex flex-col gap-[5px] pt-[7px] pb-[10px]">
            <div className="flex items-center justify-center gap-[7px] [&>button]:h-[31px]">
              <ActionButton>Customer View</ActionButton>
              <ActionButton>Full View</ActionButton>
              <ActionButton className="h-[33px]!"><Carfax />Tools</ActionButton>
              <ActionButton><SmallServiceCat />ServiceCAT</ActionButton>
              <ActionButton><SmallLubeCat />LubeCAT</ActionButton>
              <ActionButton><InspectionIcon />Inspection</ActionButton>
              <ActionButton><SmallServiceCat />Specs</ActionButton>
              <ActionButton>Customer History</ActionButton>
              <ActionButton>Vehicle History</ActionButton>
              <ActionButton>Override Credit Hold</ActionButton>
              <ActionButton>Adjust Total</ActionButton>
            </div>
            <div className="flex items-center justify-center gap-[7px] [&>button]:h-[31px]">
              <ActionButton><PhoneIcon />Contacts</ActionButton>
              <ActionButton><RefreshIcon />Refresh</ActionButton>
              <ActionButton><ConvertIcon />Convert</ActionButton>
              <ActionButton><ConsolidateIcon />Consolidate</ActionButton>
              <ActionButton><CopyIcon />Replicate/Reverse</ActionButton>
              <ActionButton><HashIcon />Change Store#</ActionButton>
              <ActionButton><PrintIcon />Print</ActionButton>
              <Button disabled aria-label="Blank" className="w-[31px]" />
              <ActionButton><SaveIcon />Save</ActionButton>
              <ActionButton><SaveIcon />Save &amp; Exit</ActionButton>
              <ActionButton><ExitIcon />Exit</ActionButton>
              <ActionButton className="from-[#1aff1a]! via-[#1aff1a]! to-[#1aff1a]! text-black"><HelpIcon />Help</ActionButton>
            </div>
          </div>
        </section>
      </main>
    </div>
  );
}
